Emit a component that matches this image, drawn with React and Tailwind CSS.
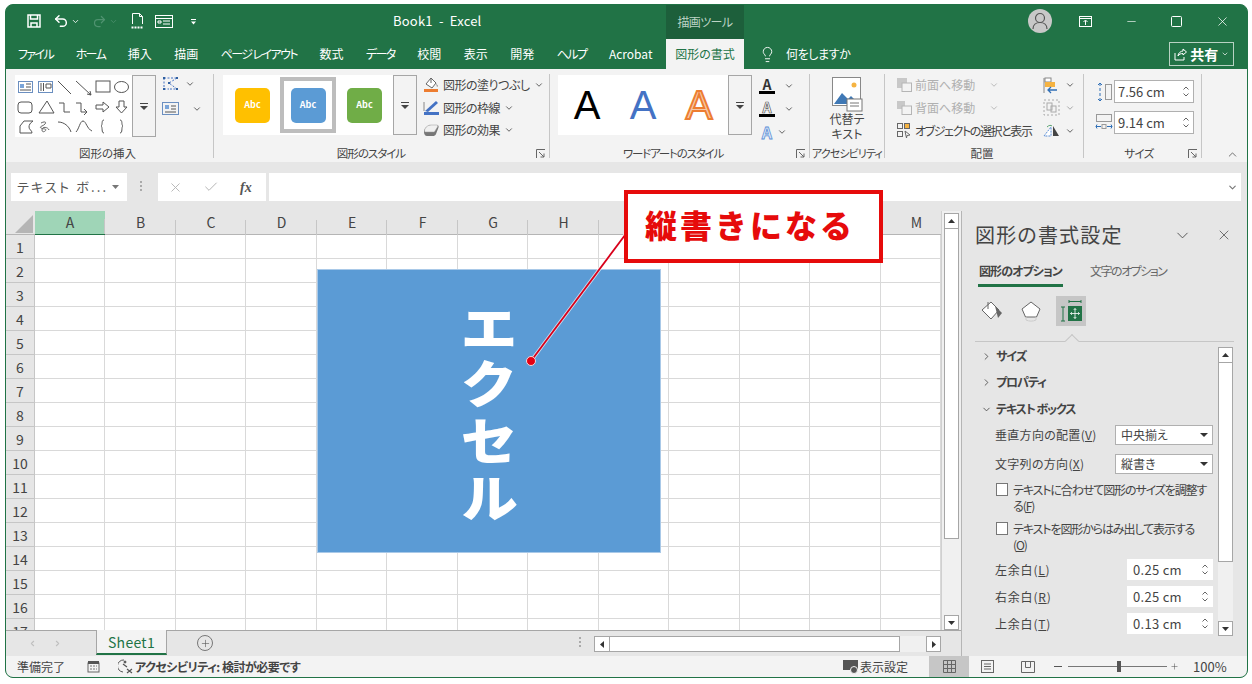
import React from 'react';
import { ChevronDown, ChevronUp, ChevronRight, X, Minus, Undo2, Redo2, Lightbulb, Check, Plus } from 'lucide-react';

const TABS = [
  { t: 'ファイル', kana: true }, { t: 'ホーム', kana: true }, { t: '挿入' }, { t: '描画' },
  { t: 'ページ レイアウト', kana: true }, { t: '数式' }, { t: 'データ', kana: true }, { t: '校閲' },
  { t: '表示' }, { t: '開発' }, { t: 'ヘルプ', kana: true }, { t: 'Acrobat' },
];
const COLS = ['A', 'B', 'C', 'D', 'E', 'F', 'G', 'H', 'I', 'J', 'K', 'L', 'M'];
const ROWS = Array.from({ length: 17 }, (_, i) => i + 1);
const GRID = 'grid grid-cols-[29px_70px_71px_70px_71px_70px_71px_70px_71px_70px_71px_70px_71px_60px]';

const Chev = ({ className = '' }) => <ChevronDown size={10} strokeWidth={2} className={`shrink-0 text-[#444] ${className}`} />;

const MoreButton = ({ className }) => (
  <div className={`flex flex-col items-center justify-center gap-[2px] border border-[#a6a6a6] bg-[#f3f3f3] ${className}`}>
    <div className="w-[8px] h-px bg-[#444]" />
    <svg width="8" height="4" viewBox="0 0 8 4"><path d="M0 0h8L4 4z" fill="#444" /></svg>
  </div>
);

const Launcher = () => (
  <svg width="10" height="10" viewBox="0 0 10 10" className="shrink-0 mr-[3px]" fill="none" stroke="#666">
    <path d="M.5 9V.5H9M3 3l5 5M8 4.5V8H4.5" />
  </svg>
);

const Group = ({ width, label, labelClass = '', launcher, children }) => (
  <div className={`${width} h-[84px] mt-[5px] border-r border-[#c6c6c6] flex flex-col shrink-0`}>
    <div className="h-[72px] shrink-0 flex">{children}</div>
    <div className="h-[15px] shrink-0 flex items-center text-[11.5px] leading-none text-[#444] whitespace-nowrap">
      <span className={`flex-1 text-center ${labelClass}`}>{label}</span>
      {launcher && <Launcher />}
    </div>
  </div>
);

const ShapeGallery = () => (
  <svg width="117" height="62" viewBox="15 75 117 62" className="bg-white shrink-0" fill="none" stroke="#555" strokeWidth="1">
    <rect x="18.5" y="81.5" width="14" height="11" stroke="#6b8fc0" />
    <path d="M20 84h4v4h-4z" fill="#7aa4d8" stroke="none" /><path d="M26 84h5M26 87h5M20 90h11" />
    <rect x="38.5" y="81.5" width="14" height="11" stroke="#6b8fc0" />
    <path d="M41 83v8M43.5 83v8M46 84h5v4h-5z" />
    <path d="M58 81l13 13" /><path d="M76 81l15 14M91 95l-1-4M91 95l-4-1" />
    <rect x="96" y="81" width="14" height="11" /><ellipse cx="121.5" cy="87" rx="7" ry="5.5" />
    <rect x="18" y="102" width="14" height="11" rx="3" /><path d="M47 101l7 12H39z" />
    <path d="M59 103h5v9h6" /><path d="M76 103h5v9h6M84 109l3 3-3 3" />
    <path d="M96 105h7v-3l6 5-6 5v-3h-7z" /><path d="M119 101h5v6h3l-5.500 6-5.500-6h3z" />
    <path d="M20 133v-7l4-5h9c-3 2-4 4-4 6 0 3 3 3 3 6z" /><path d="M41 123c6-3 6 1 1 3s3 3 3 3c3 1-3 5-3 1s6-3 7 0" stroke="#666" />
    <path d="M58 122c6 0 11 4 13 10" /><path d="M76 132c3-3 4-11 7-11s4 8 9 10" />
    <path d="M104 120c-3 0-1 5-3 6 2 1 0 7 3 7" /><path d="M120 120c3 0 1 5 3 6-2 1 0 7-3 7" />
  </svg>
);

const StyleThumb = ({ color }) => (
  <div className={`w-[35px] h-[35px] rounded-[5px] flex items-center justify-center text-[9px] font-semibold text-white ${color}`}>Abc</div>
);

const FillIcon = () => (
  <svg width="16" height="16" viewBox="0 0 16 16" fill="none"><path d="M8 1l5 5-4 5-6-4z" fill="#fff" stroke="#666" /><path d="M8 1v5" stroke="#666" /><path d="M13 6l2 3-1 1z" fill="#888" /><rect x="1" y="12" width="14" height="3" fill="#ed7d31" /></svg>
);
const LineIcon = () => (
  <svg width="16" height="16" viewBox="0 0 16 16" fill="none"><path d="M2 11L13 1l2 2L5 12z" fill="#4472c4" /><path d="M1 2v9" stroke="#888" /><rect x="1" y="12" width="15" height="3" fill="#4472c4" /></svg>
);
const EffectIcon = () => (
  <svg width="16" height="14" viewBox="0 0 16 14"><path d="M1 9c0-3 3-7 7-7h6c1 0 2 1 1.500 2.500L13 11c-.5 1.500-2 2-3 2H4c-2 0-3-2-3-4z" fill="#777" /><path d="M1.500 8c0-3 3-6 6.500-6h6c1 0 1 1 .5 2l-2.500 4c-.5 1-1 1-2 1H3c-1 0-1.500-.5-1.500-1z" fill="#f0f0f0" stroke="#999" strokeWidth=".5" /></svg>
);
const EditShapeIcon = () => (
  <svg width="17" height="15" viewBox="0 0 17 15" fill="none">
    <path d="M2 2L15 2M2 2L2 13M2 13h5M15 2l-8 5 8 6H8" stroke="#4472c4" strokeDasharray="2 1.500" />
    <path d="M1 1h2v2H1zM14 1h2v2h-2zM1 12h2v2H1zM14 12h2v2h-2zM6 6h2v2H6z" fill="#2f5f9e" />
  </svg>
);

const CmdRow = ({ icon, text, className = '' }) => (
  <div className={`h-[22.5px] flex items-center whitespace-nowrap ${className}`}>
    <div className="w-[16px] mr-[4px] flex justify-center">{icon}</div>
    <span className="text-[12px] text-[#444] tracking-[-0.5px]">{text}</span>
    <Chev className="ml-[4px]" />
  </div>
);

const TextColorIcon = ({ outline, bar = 'bg-black' }) => (
  <div className="w-[16px] flex flex-col items-center">
    <span className={`text-[14px] leading-[14px] font-semibold ${outline ? 'text-white [-webkit-text-stroke:0.7px_#555]' : 'text-[#333]'}`}>A</span>
    <div className={`w-[16px] h-[3px] ${bar}`} />
  </div>
);

const Spinner = ({ className = '' }) => (
  <div className={`flex flex-col items-center gap-[3px] ${className}`}>
    <svg width="6" height="4" viewBox="0 0 6 4" fill="none" stroke="#666"><path d="M.5 3.500L3 1l2.500 2.500" /></svg>
    <svg width="6" height="4" viewBox="0 0 6 4" fill="none" stroke="#666"><path d="M.5.5L3 3 5.500.5" /></svg>
  </div>
);

const SizeField = ({ icon, value }) => (
  <div className="flex items-center h-[23px]">
    <div className="w-[18px] mr-[1px] flex justify-center">{icon}</div>
    <div className="w-[80px] h-[23px] bg-white border border-[#b0b0b0] flex items-center pl-[3px] text-[13px] text-[#444]">
      <span className="flex-1">{value}</span>
      <Spinner className="mr-[4px]" />
    </div>
  </div>
);

const Ribbon = () => (
  <div className="h-[93px] bg-[#f3f3f3] flex shrink-0">
    <Group width="w-[208px]" label="図形の挿入" labelClass="pr-[4px]">
      <div className="flex ml-[9px] mt-[1px] h-[62px]">
        <ShapeGallery />
        <MoreButton className="w-[24px] h-[62px]" />
      </div>
      <div className="ml-[6px] mt-[2px] flex flex-col gap-[10px]">
        <div className="flex items-center gap-[6px] h-[15px]">
          <EditShapeIcon />
          <Chev />
        </div>
        <div className="flex items-center gap-[13px] h-[15px]">
          <svg width="17" height="13" viewBox="0 0 17 13" fill="none"><rect x=".5" y=".5" width="16" height="12" stroke="#6b8fc0" /><path d="M3 3h4v4H3z" fill="#7aa4d8" /><path d="M9 4h5M9 7h5M3 10h11" stroke="#555" /></svg>
          <Chev />
        </div>
      </div>
    </Group>

    <Group width="w-[336px]" label="図形のスタイル" labelClass="pr-[8px] tracking-[-1px]" launcher>
      <div className="flex ml-[9px] mt-[1px] h-[60px]">
        <div className="w-[170px] bg-white flex items-center pl-[12px]">
          <StyleThumb color="bg-[#ffc000]" />
          <div className="w-[56px] h-[56px] ml-[10px] border-[4px] border-[#bdbdbd] flex items-center justify-center shrink-0">
            <StyleThumb color="bg-[#5b9bd5]" />
          </div>
          <div className="ml-[11px]"><StyleThumb color="bg-[#70ad47]" /></div>
        </div>
        <MoreButton className="w-[24px] h-[60px]" />
      </div>
      <div className="ml-[6px]">
        <CmdRow icon={<FillIcon />} text="図形の塗りつぶし" />
        <CmdRow icon={<LineIcon />} text="図形の枠線" />
        <CmdRow icon={<EffectIcon />} text="図形の効果" />
      </div>
    </Group>

    <Group width="w-[260px]" label="ワードアートのスタイル" labelClass="tracking-[-1.2px]" launcher>
      <div className="flex ml-[8px] mt-[1px] h-[60px]">
        <div className="w-[170px] bg-white flex items-center pl-[1px] text-[40px] font-medium leading-none [font-family:'Liberation_Sans',sans-serif]">
          <span className="w-[56px] text-center text-black">A</span>
          <span className="w-[56px] text-center text-[#4472c4]">A</span>
          <span className="w-[56px] text-center text-[#f6c9a8] [-webkit-text-stroke:2px_#ed7d31]">A</span>
        </div>
        <MoreButton className="w-[24px] h-[60px]" />
      </div>
      <div className="ml-[7px] mt-[2px] flex flex-col gap-[4px]">
        <div className="flex items-center gap-[9px] h-[19px]"><TextColorIcon /><Chev /></div>
        <div className="flex items-center gap-[9px] h-[19px]"><TextColorIcon outline /><Chev /></div>
        <div className="flex items-center gap-[2px] h-[19px]">
          <span className="w-[16px] text-center text-[16px] font-semibold text-[#dbe8f8] [-webkit-text-stroke:0.8px_#5b8ed6]">A</span><Chev />
        </div>
      </div>
    </Group>

    <Group width="w-[75px]" label="アクセシビリティ" labelClass="text-[11px] tracking-[-0.9px]">
      <div className="w-full flex flex-col items-center pt-[3px]">
        <svg width="31" height="36" viewBox="0 0 31 36" fill="none">
          <rect x=".5" y=".5" width="28" height="28" fill="#fff" stroke="#888" />
          <circle cx="22" cy="8" r="2.500" fill="#f5b342" />
          <path d="M2 27l8-11 6 6 3-3 8 8z" fill="#3f78b5" />
          <rect x="15" y="22" width="15" height="12" fill="#fff" stroke="#777" />
          <path d="M18 26h9M18 29h9" stroke="#777" />
        </svg>
        <div className="text-[12px] leading-[15px] text-[#444] text-center -mt-[2px]">代替テ<br />キスト</div>
      </div>
    </Group>

    <Group width="w-[199px]" label="配置" labelClass="pr-[4px]">
      <div className="ml-[12px] w-[146px] shrink-0">
        <div className="h-[22px] flex items-center">
          <svg width="15" height="14" viewBox="0 0 15 14" className="mr-[3px] shrink-0"><rect x="0" y="0" width="10" height="10" fill="#c8c8c8" /><rect x="5" y="5" width="9.500" height="8.500" fill="#f3f3f3" stroke="#b5b5b5" /></svg>
          <span className="text-[12px] text-[#b0b0b0]">前面へ移動</span>
          <ChevronDown size={10} className="ml-[14px] text-[#b0b0b0]" />
        </div>
        <div className="h-[23px] flex items-center">
          <svg width="15" height="14" viewBox="0 0 15 14" className="mr-[3px] shrink-0"><rect x="0" y="0" width="8" height="8" fill="#c8c8c8" /><rect x="5" y="5" width="9.500" height="8.500" fill="#f3f3f3" stroke="#b5b5b5" /></svg>
          <span className="text-[12px] text-[#b0b0b0]">背面へ移動</span>
          <ChevronDown size={10} className="ml-[14px] text-[#b0b0b0]" />
        </div>
        <div className="h-[23px] flex items-center whitespace-nowrap">
          <svg width="15" height="15" viewBox="0 0 15 15" fill="none" stroke="#666" className="mr-[3px] shrink-0"><rect x=".5" y=".5" width="5" height="5" /><rect x="7.500" y=".5" width="5" height="5" fill="#f5b342" /><rect x=".5" y="8.500" width="5" height="5" /><path d="M8 8l5 4-3 .5-.5 2.500z" fill="#fff" /></svg>
          <span className="text-[12px] text-[#444] tracking-[-1.4px]">オブジェクトの選択と表示</span>
        </div>
      </div>
      <div className="flex flex-col">
        <div className="h-[22px] flex items-center gap-[5px]">
          <svg width="17" height="17" viewBox="0 0 17 17" fill="none"><rect x="2" y="1" width="6" height="4" fill="#fff" stroke="#888" /><rect x="2" y="5" width="10" height="5" fill="#f5b342" /><path d="M1 1v15" stroke="#888" /><path d="M14 13H5M8 10l-3 3 3 3" stroke="#2f6fb7" strokeWidth="1.300" /></svg>
          <Chev />
        </div>
        <div className="h-[23px] flex items-center gap-[5px]">
          <svg width="17" height="17" viewBox="0 0 17 17" fill="none" stroke="#aaa"><rect x="1" y="1" width="15" height="15" strokeDasharray="2 2" /><rect x="4" y="4" width="5" height="7" /><rect x="8" y="7" width="5" height="6" /></svg>
          <ChevronDown size={10} className="text-[#999]" />
        </div>
        <div className="h-[23px] flex items-center gap-[5px]">
          <svg width="17" height="13" viewBox="0 0 17 13"><path d="M1 12L8 3v9z" fill="#fff" stroke="#5b8ed6" strokeDasharray="2 1" /><path d="M10 2v10h6z" fill="#444" /><path d="M4 3c2-2 4-2 5-1" stroke="#5aa36f" fill="none" /></svg>
          <Chev />
        </div>
      </div>
    </Group>

    <Group width="w-[118px]" label="サイズ" labelClass="pl-[6px] tracking-[-0.6px]" launcher>
      <div className="ml-[11px] mt-[6px] flex flex-col gap-[8px]">
        <SizeField value="7.56 cm" icon={
          <svg width="15" height="20" viewBox="0 0 15 20" fill="none"><path d="M3 1v18" stroke="#2f6fb7" strokeDasharray="3 2" /><rect x="8.500" y="2.500" width="6" height="15" stroke="#999" /><path d="M1 3l2-2 2 2M1 17l2 2 2-2" stroke="#2f6fb7" /></svg>
        } />
        <SizeField value="9.14 cm" icon={
          <svg width="18" height="17" viewBox="0 0 18 17" fill="none"><rect x="1.500" y=".5" width="15" height="7" stroke="#999" /><path d="M1 12.500h5M12 12.500h5M2 10.500l-1 2 1 2M16 10.500l1 2-1 2" stroke="#2f6fb7" /><rect x="7" y="10.500" width="4" height="4" stroke="#999" /></svg>
        } />
      </div>
    </Group>

    <div className="flex-1 flex items-end justify-end pb-[1px] pr-[8px]">
      <ChevronUp size={13} strokeWidth={1.5} className="text-[#555]" />
    </div>
  </div>
);

const TitleBar = () => (
  <div className="h-[34px] pb-[2px] flex items-center text-white shrink-0">
    <svg width="14" height="14" viewBox="0 0 14 14" fill="none" stroke="#fff" strokeWidth="1.500" className="ml-[21px]">
      <path d="M1 1h12v12H1z" /><path d="M3.500 1v4h7V1M4 13V9h6v4" />
    </svg>
    <Undo2 size={16} strokeWidth={2.2} className="ml-[12px]" />
    <ChevronDown size={9} strokeWidth={2.2} className="ml-[2px]" />
    <Redo2 size={15} strokeWidth={2} className="ml-[12px] text-[#4f9270]" />
    <ChevronDown size={9} className="ml-[2px] text-[#4f9270]" />
    <svg width="13" height="16" viewBox="0 0 13 16" fill="none" stroke="#fff" className="ml-[13px]">
      <path d="M1.500 11V.5h7l3 3V11M8.500.5v3h3" /><path d="M.5 14.500h12" strokeWidth="2" strokeDasharray="2 1" />
    </svg>
    <svg width="18" height="13" viewBox="0 0 18 13" fill="none" stroke="#fff" className="ml-[11px]">
      <rect x=".5" y=".5" width="17" height="12" /><path d="M.5 3.500h17M3 6h3v2H3zM8 6h7M8 9h7" />
    </svg>
    <svg width="7" height="7" viewBox="0 0 7 7" className="ml-[17px]" fill="#fff"><path d="M1 1h5v1H1zM1 3.500h5L3.500 6.500z" /></svg>
    <div className="ml-[196px] w-[87px] text-[13px] whitespace-nowrap tracking-[0.2px]">Book1&nbsp;&nbsp;-&nbsp;&nbsp;Excel</div>
    <div className="ml-[186px] w-[78px] self-stretch -mb-[2px] bg-[#1d5f3b] text-[#bcd3c5] text-[12px] tracking-[-0.6px] flex items-center justify-center">描画ツール</div>
    <div className="ml-[284px] w-[24px] h-[24px] rounded-full bg-[#c8c8c8] flex items-center justify-center">
      <svg width="16" height="18" viewBox="0 0 16 18" fill="none" stroke="#555" strokeWidth="1.200"><circle cx="8" cy="6" r="4.500" /><path d="M1 17c0-4 3-6.500 7-6.500s7 2.500 7 6.500" /></svg>
    </div>
    <svg width="13" height="11" viewBox="0 0 13 11" fill="none" stroke="#fff" className="ml-[27px]">
      <rect x=".5" y=".5" width="12" height="10" /><path d="M.5 2.500h12M6.500 9V4.500M4.500 6l2-2 2 2" />
    </svg>
    <Minus size={13} strokeWidth={1.2} className="ml-[33px]" />
    <svg width="11" height="11" viewBox="0 0 11 11" fill="none" stroke="#fff" className="ml-[33px]"><rect x=".5" y=".5" width="10" height="10" rx="1" /></svg>
    <X size={15} strokeWidth={1.2} className="ml-[33px]" />
  </div>
);

const TabRow = () => (
  <div className="h-[30px] flex text-white text-[12px] shrink-0">
    <div className="flex items-center gap-[22.5px] pl-[12px] w-[660px] whitespace-nowrap">
      {TABS.map(({ t, kana }) => <span key={t} className={kana ? 'tracking-[-1.6px]' : ''}>{t}</span>)}
    </div>
    <div className="w-[78px] bg-[#f3f3f3] text-[#217346] flex items-center justify-center">図形の書式</div>
    <Lightbulb size={17} strokeWidth={1.3} className="ml-[15px] self-center" />
    <span className="ml-[10px] self-center whitespace-nowrap tracking-[-0.4px]">何をしますか</span>
    <div className="ml-[319px] mt-[3px] w-[65px] h-[24px] border border-[#b8d2c3] flex items-center justify-center gap-[3px]">
      <svg width="13" height="13" viewBox="0 0 13 13" fill="none" stroke="#fff"><path d="M1 5v7h9V9M4 8c0-3 3-5 5-5V1l3.500 3L9 7V5.500C7 5.500 5 6 4 8z" /></svg>
      <span className="font-bold text-[14px]">共有</span>
      <ChevronDown size={8} strokeWidth={2} />
    </div>
  </div>
);

const FormulaBar = () => (
  <div className="h-[49px] bg-[#e6e6e6] flex items-start pt-[11px] shrink-0">
    <div className="ml-[5px] w-[116px] h-[28px] bg-white flex items-center pl-[6px] text-[13px] text-[#555] tracking-[2.2px] whitespace-nowrap">
      <span className="flex-1">テキスト ボ...</span>
      <svg width="7" height="4" viewBox="0 0 7 4" className="mr-[8px]"><path d="M0 0h7L3.500 4z" fill="#777" /></svg>
    </div>
    <div className="ml-[13px] mt-[8px] flex flex-col gap-[2px]">
      <div className="w-[2px] h-[2px] bg-[#aaa]" /><div className="w-[2px] h-[2px] bg-[#aaa]" /><div className="w-[2px] h-[2px] bg-[#aaa]" />
    </div>
    <div className="ml-[16px] w-[108px] h-[28px] bg-white flex items-center text-[#b5b5b5]">
      <X size={15} className="ml-[10px]" strokeWidth={1.5} />
      <Check size={16} className="ml-[20px]" strokeWidth={1.5} />
      <span className="ml-[21px] text-[14px] italic font-semibold text-[#555] [font-family:'Liberation_Serif',serif]">fx</span>
    </div>
    <div className="ml-[3px] w-[972px] h-[28px] bg-white flex items-center justify-end pr-[3px]">
      <ChevronDown size={11} strokeWidth={2.5} className="text-[#777]" />
    </div>
  </div>
);

const ScrollUp = () => (
  <div className="w-[15px] h-[16px] bg-white border border-[#a6a6a6] flex items-center justify-center shrink-0">
    <svg width="7" height="4" viewBox="0 0 7 4"><path d="M0 4h7L3.500 0z" fill="#333" /></svg>
  </div>
);
const ScrollDown = () => (
  <div className="w-[15px] h-[15px] bg-white border border-[#a6a6a6] flex items-center justify-center shrink-0">
    <svg width="7" height="4" viewBox="0 0 7 4"><path d="M0 0h7L3.500 4z" fill="#333" /></svg>
  </div>
);

const Sheet = () => (
  <div className="h-[419px] flex">
    <div className="w-[935px] flex flex-col">
      <div className={`${GRID} h-[24px] bg-[#e6e6e6] border-b border-[#b5b5b5] shrink-0`}>
        <div className="flex items-end justify-end pr-[2px] pb-[2px]">
          <svg width="18" height="18" viewBox="0 0 18 18"><path d="M18 0v18H0z" fill="#b5b5b5" /></svg>
        </div>
        {COLS.map((c, i) => (
          <div key={c} className={`flex text-[14px] text-[#444] ${i === 0 ? 'bg-[#9fd5b7] border-b border-[#217346] text-[#1d5f3b]' : ''}`}>
            <span className={`flex-1 text-center leading-[23px] ${c === 'M' ? 'pl-[11px]' : 'pl-[1px]'}`}>{c}</span>
            {c !== 'M' && <div className="w-px h-[15px] self-end bg-[#c6c6c6]" />}
          </div>
        ))}
      </div>
      <div className={`${GRID} auto-rows-[24px] h-[395px] overflow-hidden bg-white`}>
        {ROWS.map(r => (
          <React.Fragment key={r}>
            <div className="bg-[#e6e6e6] border-r border-b border-[#c6c6c6] text-[14px] text-[#444] text-center leading-[24px]">{r}</div>
            {COLS.map(c => <div key={c} className="border-r border-b border-[#d9d9d9]" />)}
          </React.Fragment>
        ))}
      </div>
    </div>
    <div className="w-[20px] bg-[#f0f0f0] border-l border-[#d0d0d0] flex flex-col items-center pt-[2px]">
      <ScrollUp />
      <div className="w-[15px] h-[310px] bg-white border border-t-0 border-[#a6a6a6]" />
      <div className="flex-1" />
      <ScrollDown />
    </div>
  </div>
);

const TabBar = () => (
  <div className="h-[26px] bg-[#e6e6e6] border-t border-[#a6a6a6] flex items-start shrink-0">
    <ChevronRight size={9} strokeWidth={3} className="ml-[22px] mt-[8px] rotate-180 text-[#c0c0c0]" />
    <ChevronRight size={9} strokeWidth={3} className="ml-[16px] mt-[8px] text-[#c0c0c0]" />
    <div className="ml-[34px] w-[71px] h-[25px] -mt-px bg-[#f3f3f3] border-x border-[#a6a6a6] border-b-2 border-b-[#217346] text-[14px] text-[#217346] tracking-[0.3px] text-center leading-[24px]">Sheet1</div>
    <div className="ml-[30px] mt-[4px] w-[16px] h-[16px] rounded-full border border-[#777] flex items-center justify-center">
      <Plus size={11} strokeWidth={1.3} className="text-[#555]" />
    </div>
    <div className="ml-[366px] mt-[6px] flex flex-col gap-[2px]">
      <div className="w-[2px] h-[2px] bg-[#aaa]" /><div className="w-[2px] h-[2px] bg-[#aaa]" /><div className="w-[2px] h-[2px] bg-[#aaa]" />
    </div>
    <div className="ml-[13px] mt-[5px] w-[347px] h-[16px] flex">
      <div className="w-[16px] bg-white border border-[#a6a6a6] flex items-center justify-center">
        <svg width="4" height="7" viewBox="0 0 4 7"><path d="M4 0v7L0 3.500z" fill="#333" /></svg>
      </div>
      <div className="w-[290px] bg-white border-y border-r border-[#a6a6a6]" />
      <div className="flex-1 bg-[#f0f0f0]" />
      <div className="w-[15px] bg-white border border-[#a6a6a6] flex items-center justify-center">
        <svg width="4" height="7" viewBox="0 0 4 7"><path d="M0 0v7l4-3.500z" fill="#333" /></svg>
      </div>
    </div>
  </div>
);

const PaneHead = ({ text, open, className = '' }) => (
  <div className={`flex items-center h-[26px] ${className}`}>
    <div className="w-[20px] flex justify-center">
      {open ? <ChevronDown size={11} strokeWidth={1.8} className="text-[#444]" /> : <ChevronRight size={11} strokeWidth={1.8} className="text-[#444]" />}
    </div>
    <span className="text-[12px] font-bold text-[#444] tracking-[-1.1px]">{text}</span>
  </div>
);

const SelectRow = ({ label, u, value, className = '' }) => (
  <div className={`flex items-center h-[20px] pl-[20px] text-[12px] text-[#444] ${className}`}>
    <span className="w-[120px] whitespace-nowrap tracking-[0.3px]">{label}(<u>{u}</u>)</span>
    <div className="w-[98px] h-[20px] bg-white border border-[#b0b0b0] flex items-center pl-[5px]">
      <span className="flex-1">{value}</span>
      <svg width="8" height="4" viewBox="0 0 8 4" className="mr-[4px]"><path d="M0 0h8L4 4z" fill="#333" /></svg>
    </div>
  </div>
);

const CheckRow = ({ line1, line2, u, className = '' }) => (
  <div className={`flex pl-[21px] text-[12px] text-[#444] leading-[16px] ${className}`}>
    <div className="w-[12px] h-[13px] mt-[1px] bg-white border border-[#777] shrink-0" />
    <div className="ml-[5px] whitespace-nowrap tracking-[-1.1px]">{line1}<br />{line2}(<u>{u}</u>)</div>
  </div>
);

const MarginRow = ({ label, u, value, className = '' }) => (
  <div className={`flex items-center h-[21px] pl-[20px] text-[12px] text-[#444] ${className}`}>
    <span className="w-[132px] whitespace-nowrap tracking-[0.8px]">{label}(<u>{u}</u>)</span>
    <div className="w-[86px] h-[21px] bg-white flex items-center pl-[6px] text-[13px] tracking-[0.3px]">
      <span className="flex-1">{value}</span>
      <Spinner className="mr-[5px]" />
    </div>
  </div>
);

const FormatPane = () => (
  <div className="w-[286px] bg-[#e6e6e6] border-l border-[#b5b5b5] flex flex-col">
    <div className="h-[48px] flex items-center pl-[13px]">
      <span className="text-[20px] text-[#444] tracking-[1.2px] whitespace-nowrap">図形の書式設定</span>
      <ChevronDown size={19} strokeWidth={1.1} className="ml-[50px] text-[#444]" />
      <X size={16} strokeWidth={1.1} className="ml-[24px] text-[#444]" />
    </div>
    <div className="h-[29px] flex items-start pl-[17px] text-[12px] whitespace-nowrap">
      <div className="w-[85px] -ml-[1px] h-[28px] border-b-[3px] border-[#217346] font-bold text-[#444] pl-[1px] leading-[24px] tracking-[-0.9px]">図形のオプション</div>
      <span className="ml-[27px] text-[#666] leading-[24px] tracking-[-1.5px]">文字のオプション</span>
    </div>
    <div className="mt-[8px] h-[30px] flex items-center pl-[19px]">
      <svg width="22" height="20" viewBox="0 0 22 20"><path d="M10 1l8 8-8 9-9-9z" fill="#fff" stroke="#666" /><path d="M7 1v7" stroke="#666" /><path d="M14 5l7 7-4 5z" fill="#666" /></svg>
      <svg width="20" height="21" viewBox="0 0 20 21" fill="none" className="ml-[18px]"><path d="M10 1l9 7-3.500 8h-11L1 8z" fill="#fff" stroke="#666" /><path d="M5 16v3c3 1.500 7 1.500 10 0v-3" stroke="#ccc" /></svg>
      <div className="ml-[15px] w-[30px] h-[30px] bg-[#c6c6c6] flex items-center justify-center">
        <svg width="24" height="24" viewBox="0 0 24 24" fill="none">
          <path d="M10 2.500h12M10 1v3M22 1v3" stroke="#217346" /><path d="M4 8v14M2 8h4M2 22h4" stroke="#217346" />
          <rect x="9" y="7" width="14" height="15" fill="#217346" />
          <path d="M16 9.500v10M11.500 14.500h9M14.700 11l1.300-1.500 1.300 1.500M14.700 18l1.300 1.500 1.300-1.500M13 13.200l-1.500 1.300 1.500 1.300M19 13.200l1.500 1.300-1.500 1.300" stroke="#fff" strokeWidth=".8" />
        </svg>
      </div>
    </div>
    <div className="mt-[15px] mx-[13px] border-b border-[#c6c6c6] relative">
      <div className="absolute left-[92px] -top-[5px] w-[10px] h-[10px] rotate-45 bg-[#e6e6e6] border-l border-t border-[#c6c6c6]" />
    </div>
    <div className="flex">
      <div className="w-[256px] shrink-0 pt-[1px] pl-[13px]">
        <PaneHead text="サイズ" className="pl-[1px]" />
        <PaneHead text="プロパティ" className="pl-[1px]" />
        <PaneHead text="テキスト ボックス" open className="pl-[1px] mt-[1px]" />
        <SelectRow label="垂直方向の配置" u="V" value="中央揃え" className="mt-[3px]" />
        <SelectRow label="文字列の方向" u="X" value="縦書き" className="mt-[9px]" />
        <CheckRow line1="テキストに合わせて図形のサイズを調整す" line2="る" u="F" className="mt-[8px]" />
        <CheckRow line1="テキストを図形からはみ出して表示する" line2="" u="O" className="mt-[7px]" />
        <MarginRow label="左余白" u="L" value="0.25 cm" className="mt-[6px]" />
        <MarginRow label="右余白" u="R" value="0.25 cm" className="mt-[6px]" />
        <MarginRow label="上余白" u="T" value="0.13 cm" className="mt-[6px]" />
      </div>
      <div className="w-[15px] mt-[5px] h-[289px] bg-[#f0f0f0] flex flex-col">
        <ScrollUp />
        <div className="h-[199px] bg-white border border-t-0 border-[#a6a6a6]" />
        <div className="flex-1" />
        <ScrollDown />
      </div>
    </div>
  </div>
);

const StatusBar = () => (
  <div className="h-[21px] bg-[#f3f3f3] flex items-center text-[12px] text-[#444] whitespace-nowrap shrink-0">
    <span className="ml-[11px] w-[48px]">準備完了</span>
    <svg width="13" height="13" viewBox="0 0 13 13" className="ml-[22px] shrink-0"><rect x="1" y="3" width="11" height="9" fill="none" stroke="#666" /><path d="M1 1h11v3H1z" fill="#555" /><path d="M3 6h2M6 6h2M9 6h1M3 9h2M6 9h2M9 9h1" stroke="#777" /></svg>
    <svg width="15" height="15" viewBox="0 0 15 15" fill="none" stroke="#555" className="ml-[18px] shrink-0"><path d="M6 1a6 6 0 0 0-1 12" /><circle cx="7" cy="3" r="1" fill="#555" /><path d="M5 5l4 3M9 10l5 4M14 10l-5 4" strokeWidth="1.200" /></svg>
    <span className="ml-[2px] font-semibold w-[163px] tracking-[-0.5px]">アクセシビリティ: 検討が必要です</span>
    <svg width="17" height="14" viewBox="0 0 17 14" className="ml-[545px] shrink-0"><rect x="0" y="0" width="15" height="10" fill="#555" /><circle cx="11" cy="10" r="3.500" fill="#555" stroke="#f3f3f3" /></svg>
    <span className="w-[50px]">表示設定</span>
    <div className="ml-[19px] w-[40px] h-full bg-[#c6c6c6] flex items-center justify-center">
      <svg width="13" height="13" viewBox="0 0 13 13" fill="none" stroke="#666"><path d="M.5.5h12v12H.5zM.5 4.500h12M.5 8.500h12M4.500.5v12M8.500.5v12" /></svg>
    </div>
    <svg width="13" height="13" viewBox="0 0 13 13" fill="none" stroke="#666" className="ml-[12px]"><rect x=".5" y=".5" width="12" height="12" /><path d="M3 4h7M3 6.500h7M3 9h7" /></svg>
    <svg width="14" height="12" viewBox="0 0 14 12" fill="none" stroke="#666" className="ml-[27px]"><path d="M.5.5h13v11H.5zM4.500.5v6h5v-6" /></svg>
    <span className="ml-[19px] w-[8px] h-px bg-[#555]" />
    <div className="ml-[6px] w-[99px] h-[11px] flex items-center">
      <div className="w-[49px] h-px bg-[#777]" />
      <div className="w-[4px] h-[11px] bg-[#555]" />
      <div className="flex-1 h-px bg-[#777]" />
    </div>
    <Plus size={9} strokeWidth={1.3} className="ml-[3px] text-[#444]" />
    <span className="ml-[14px] text-[13px]">100%</span>
  </div>
);

const Callout = () => (
  <>
    <div className="absolute left-[317px] top-[269px] w-[344px] h-[284px] bg-[#5b9bd5] border border-[#a9c9e8] flex items-center justify-center">
      <span className="[writing-mode:vertical-rl] [text-orientation:upright] text-white text-[58px] font-black leading-none tracking-[5px] scale-y-[0.9] mt-[8px] [font-feature-settings:normal]">エクセル</span>
    </div>
    <svg width="110" height="180" viewBox="0 0 110 180" className="absolute left-[525px] top-[200px]" fill="none">
      <path d="M103 31L6 161" stroke="#fff" strokeWidth="3.500" opacity=".7" />
      <path d="M103 31L6 161" stroke="#d8001a" strokeWidth="1.800" />
      <circle cx="6" cy="161" r="4.500" fill="#e60012" stroke="#f4d9dc" strokeWidth="1" />
    </svg>
    <div className="absolute left-[624px] top-[190px] w-[259px] h-[73px] bg-white border-[4px] border-[#e60b0b] flex items-center pl-[17px] pb-[6px] text-[32px] font-black text-[#e60b0b] tracking-[3px] leading-none whitespace-nowrap [font-feature-settings:normal]">
      縦書きになる
    </div>
  </>
);

export default function App() {
  return (
    <div className="relative w-[1252px] h-[684px] overflow-hidden bg-white pl-[5px] pt-[4px] [font-family:'Noto_Sans_CJK_JP','Noto_Sans',sans-serif] [font-feature-settings:'palt']">
      <div className="w-[1243px] h-[674px] rounded-[8px] overflow-hidden border border-[#217346] bg-[#217346] flex flex-col">
        <TitleBar />
        <TabRow />
        <Ribbon />
        <FormulaBar />
        <div className="flex flex-1 min-h-0">
          <div className="w-[955px] shrink-0 flex flex-col">
            <Sheet />
            <TabBar />
          </div>
          <FormatPane />
        </div>
        <StatusBar />
      </div>
      <Callout />
    </div>
  );
}
